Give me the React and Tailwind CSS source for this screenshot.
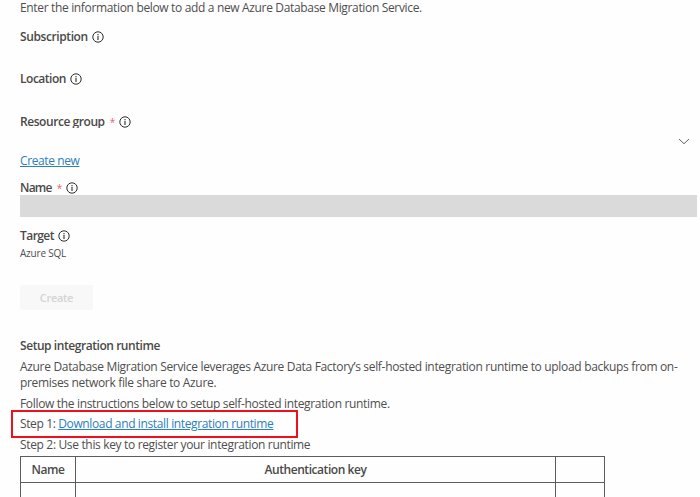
function InfoIcon({ className = "" }) {
  return (
    <svg viewBox="0 0 12 12" className={`h-3 w-3 shrink-0 ${className}`} fill="none" stroke="#2b2b2b">
      <circle cx="6" cy="6" r="5.2" strokeWidth="1" />
      <path d="M6 5v3.9" strokeWidth="1.1" />
      <path d="M6 3v1.2" strokeWidth="1.1" />
    </svg>
  );
}

function Field({ label, required, className, textClass }) {
  return (
    <div className={`flex h-4 items-center font-semibold text-[#4a4948] ${className}`}>
      <span className={`whitespace-nowrap ${textClass}`}>{label}</span>
      {required && <span className="ml-[5px] w-[5px] text-[10px] font-normal text-[#f0606a]">*</span>}
      <InfoIcon className="ml-1" />
    </div>
  );
}

export default function App() {
  return (
    <main className="h-[497px] w-[700px] overflow-hidden bg-[#fefefe] pl-5 font-['Open_Sans','Noto_Sans',sans-serif] text-[12px] leading-4 text-[#4e4e4e]">
      <p className="h-4 w-fit whitespace-nowrap tracking-[-0.34px]">
        Enter the information below to add a new Azure Database Migration Service.
      </p>
      <Field label="Subscription" className="mt-[13px]" textClass="tracking-[-0.4px]" />
      <Field label="Location" className="mt-[26px]" textClass="tracking-[-0.48px]" />
      <Field
        label="Resource group"
        required
        className="mt-[27px]"
        textClass="h-[14px] -mt-[2px] overflow-hidden tracking-[-0.44px]"
      />
      <div className="flex h-[22px] items-center justify-end pr-[10px]">
        <svg viewBox="0 0 12 7" className="h-[7px] w-3" fill="none" stroke="#605e5c">
          <path d="M1 1l5 4.7L11 1" />
        </svg>
      </div>
      <a className="mt-px block h-4 w-fit whitespace-nowrap tracking-[-0.4px] text-[#2b7fbf] underline">Create new</a>
      <Field label="Name" required className="mt-[11px]" textClass="tracking-[-0.75px]" />
      <div className="-mt-px h-[22px] w-[677px] bg-[#dadada]" />
      <Field label="Target" className="mt-[11px]" textClass="tracking-[-0.55px]" />
      <p className="mt-px h-4 w-fit whitespace-nowrap text-[10px] tracking-[-0.2px]">Azure SQL</p>
      <button className="mt-6 flex h-[25px] w-[73px] items-center justify-center rounded-[2px] bg-[#f8f8f8] text-[11px] font-semibold tracking-[-0.3px] text-[#d4d4d4]">
        Create
      </button>
      <h2 className="mt-7 h-4 w-fit whitespace-nowrap font-semibold tracking-[-0.44px] text-[#4a4948]">
        Setup integration runtime
      </h2>
      <p className="mt-[5px] h-8 w-[677px] whitespace-nowrap tracking-[-0.32px]">
        <span>Azure Database Migration Service leverages Azure Data Factory’s self-hosted integration runtime to upload backups from on-</span>
        <br />
        <span>premises network file share to Azure.</span>
      </p>
      <p className="mt-[5px] h-4 w-fit whitespace-nowrap tracking-[-0.33px]">
        Follow the instructions below to setup self-hosted integration runtime.
      </p>
      <div className="-mt-[2px] -ml-[9px] flex h-7 w-[287px] items-center border-2 border-[#f0101c] pl-[7px] whitespace-nowrap tracking-[-0.37px]">
        <span>Step 1:&nbsp;</span>
        <a className="text-[#2b7fbf] underline">Download and install integration runtime</a>
      </div>
      <p className="-mt-px h-4 w-fit whitespace-nowrap tracking-[-0.34px]">
        Step 2: Use this key to register your integration runtime
      </p>
      <div className="mt-[3px] grid h-[60px] w-[585px] grid-cols-[55px_480px_49px] grid-rows-[26px_34px] border-t border-l border-[#5c5c5c] text-center font-semibold tracking-[-0.44px] text-[#4a4948]">
        <div className="border-r border-b border-[#5c5c5c] pt-[5px]">Name</div>
        <div className="border-r border-b border-[#5c5c5c] pt-[5px]">Authentication key</div>
        <div className="border-r border-b border-[#5c5c5c]" />
        <div className="border-r border-[#5c5c5c]" />
        <div className="border-r border-[#5c5c5c]" />
        <div className="border-r border-[#5c5c5c]" />
      </div>
    </main>
  );
}
